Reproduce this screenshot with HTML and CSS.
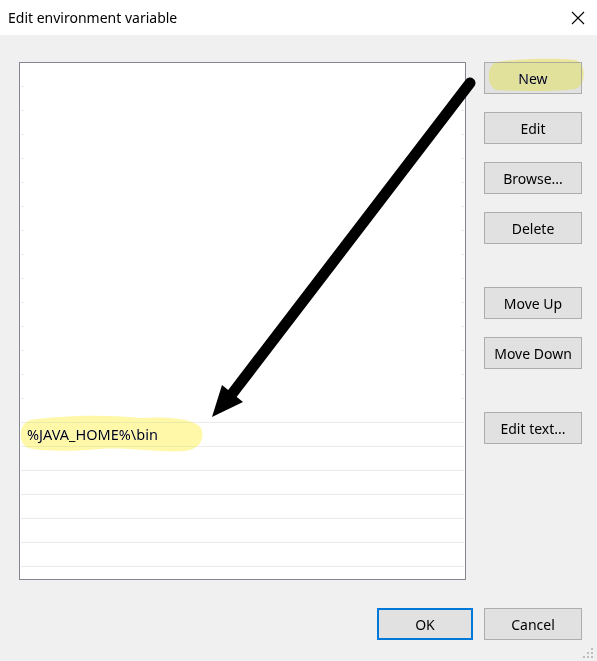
FILE: index.html
```html
<!DOCTYPE html>
<html lang="en">
<head>
<meta charset="utf-8">
<title>Edit environment variable</title>
<link rel="stylesheet" href="styles.css">
</head>
<body>
<div class="window">
  <header class="titlebar">
    <span class="title">Edit environment variable</span>
    <svg class="close" width="14" height="14" viewBox="0 0 14 14"><path d="M1 1L13 13M13 1L1 13" stroke="#000" stroke-width="1.1" fill="none"/></svg>
  </header>
  <main class="content">
    <div class="top">
      <div class="list">
        <div class="row ghost"></div><div class="row ghost"></div><div class="row ghost"></div><div class="row ghost"></div>
        <div class="row ghost"></div><div class="row ghost"></div><div class="row ghost"></div><div class="row ghost"></div>
        <div class="row ghost"></div><div class="row ghost"></div><div class="row ghost"></div><div class="row ghost"></div>
        <div class="row ghost"></div><div class="row ghost"></div>
        <div class="row"></div>
        <div class="row">%JAVA_HOME%\bin</div>
        <div class="row"></div><div class="row"></div><div class="row"></div><div class="row"></div><div class="row"></div><div class="row"></div>
      </div>
      <div class="actions">
        <div class="group">
          <button class="btn">New</button>
          <button class="btn">Edit</button>
          <button class="btn">Browse...</button>
          <button class="btn">Delete</button>
        </div>
        <div class="group">
          <button class="btn">Move Up</button>
          <button class="btn">Move Down</button>
        </div>
        <div class="group">
          <button class="btn">Edit text...</button>
        </div>
      </div>
    </div>
    <div class="footer">
      <button class="btn ok">OK</button>
      <button class="btn">Cancel</button>
    </div>
  </main>
  <svg class="grip" width="12" height="12" viewBox="0 0 12 12">
    <rect x="8" y="0" width="2" height="2"/>
    <rect x="4" y="4" width="2" height="2"/><rect x="8" y="4" width="2" height="2"/>
    <rect x="0" y="8" width="2" height="2"/><rect x="4" y="8" width="2" height="2"/><rect x="8" y="8" width="2" height="2"/>
  </svg>
  <svg class="annotations highlights" width="597" height="661" viewBox="0 0 597 661">
    <path class="hl-new" d="M497,62 C520,58 560,58 576,60 C587,64 586,86 575,89 C555,92 515,91 497,90 C486,88 486,64 497,62 Z"/>
    <path class="hl-item" d="M30,420 C60,416 100,414 140,418 C170,416 195,419 201,428 C206,440 198,450 185,451 C160,453 130,447 100,449 C70,452 40,451 28,448 C18,444 18,424 30,420 Z"/>
  </svg>
  <svg class="annotations" width="597" height="661" viewBox="0 0 597 661">
    <line x1="470" y1="83" x2="232" y2="394" stroke="#000" stroke-width="11" stroke-linecap="round"/>
    <polygon points="212,417 222,385 243,402" fill="#000"/>
  </svg>
</div>
</body>
</html>
```

FILE: styles.css
```css
* { box-sizing: border-box; }
html, body { margin: 0; padding: 0; }
body {
  background: #f0f0f0;
  font-family: "Noto Sans", "Open Sans", sans-serif;
  font-size: 14px;
  color: #000;
}
.window {
  position: relative;
  width: 597px;
  height: 661px;
  overflow: hidden;
  background: #f0f0f0;
}
.titlebar {
  height: 35px;
  background: #fff;
  display: flex;
  align-items: center;
  justify-content: space-between;
  padding: 0 12px 0 8px;
}
.title { font-size: 14px; }
.close { display: block; }
.content {
  padding: 27px 15px 0 19px;
}
.top {
  display: flex;
  gap: 18px;
}
.list {
  width: 447px;
  height: 518px;
  border: 1px solid #828790;
  background: #fff;
  padding: 0 1px;
  overflow: hidden;
}
.row {
  height: 24px;
  border-bottom: 1px solid #ebebeb;
  padding-left: 6px;
  line-height: 23px;
  font-size: 14.5px;
  white-space: nowrap;
}
.row.ghost {
  border-bottom: none;
  background:
    linear-gradient(#ececec, #ececec) left bottom / 3px 1px no-repeat,
    linear-gradient(#ececec, #ececec) right bottom / 3px 1px no-repeat;
}
.actions {
  display: flex;
  flex-direction: column;
  gap: 43px;
}
.group {
  display: flex;
  flex-direction: column;
  gap: 18px;
}
.btn {
  width: 98px;
  height: 32px;
  background: #e1e1e1;
  border: 1px solid #adadad;
  font: inherit;
  color: #000;
  padding: 0;
  margin: 0;
}
.footer {
  margin-top: 28px;
  display: flex;
  justify-content: flex-end;
  gap: 11px;
}
.btn.ok {
  width: 96px;
  border: 2px solid #0078d7;
}
.grip {
  position: absolute;
  right: 2px;
  bottom: 1px;
  fill: #bdbdbd;
}
.annotations {
  position: absolute;
  left: 0;
  top: 0;
  pointer-events: none;
}
.highlights { mix-blend-mode: darken; }
.hl-new { fill: #ebe69b; }
.hl-item { fill: #fff8a8; }
```
